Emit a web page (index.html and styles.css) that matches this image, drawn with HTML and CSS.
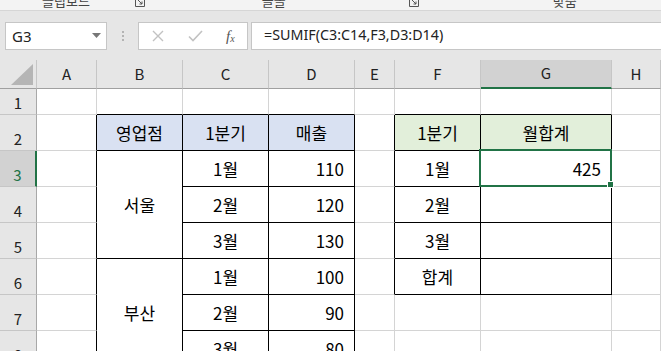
FILE: index.html
```html
<!DOCTYPE html>
<html lang="ko">
<head>
    <meta charset="UTF-8">
    <title>SUMIF 월합계</title>
    <link rel="stylesheet" href="styles.css">
</head>
<body>

<!-- Ribbon (group labels, cut off at the top) -->
<div class="ribbon">
    <span class="group-label clip">클립보드</span>
    <svg class="launcher launcher-1" width="12" height="9" viewBox="0 0 12 9">
        <path d="M1.5 0V7.5H10.5V0" fill="none" stroke="#555" stroke-width="1"/>
        <path d="M3.5 0.5L8 5M8 2.5V5H5.5" fill="none" stroke="#555" stroke-width="1"/>
    </svg>
    <span class="group-label font">글꼴</span>
    <svg class="launcher launcher-2" width="12" height="9" viewBox="0 0 12 9">
        <path d="M1.5 0V7.5H10.5V0" fill="none" stroke="#555" stroke-width="1"/>
        <path d="M3.5 0.5L8 5M8 2.5V5H5.5" fill="none" stroke="#555" stroke-width="1"/>
    </svg>
    <span class="group-label align">맞춤</span>
</div>

<!-- Formula bar -->
<div class="formula-bar">
    <div class="name-box">
        <span>G3</span>
        <svg width="9" height="5" viewBox="0 0 9 5"><path d="M0 0H9L4.5 5Z" fill="#777"/></svg>
    </div>
    <div class="grip">
        <i></i><i></i><i></i>
    </div>
    <div class="fx-buttons">
        <svg width="12" height="12" viewBox="0 0 12 12"><path d="M1 1L11 11M11 1L1 11" stroke="#c2c2c2" stroke-width="1.4"/></svg>
        <svg width="15" height="12" viewBox="0 0 15 12"><path d="M1 6.5L5 10.5L14 1" fill="none" stroke="#c2c2c2" stroke-width="1.6"/></svg>
        <span class="fx">f<sub>x</sub></span>
    </div>
    <div class="formula">=SUMIF(C3:C14,F3,D3:D14)</div>
</div>

<!-- Worksheet -->
<div class="sheet">
    <!-- column headers -->
    <div class="corner"><svg width="22" height="21" viewBox="0 0 22 21"><path d="M22 0V21H0Z" fill="#b5b5b5"/></svg></div>
    <div class="col-head">A</div>
    <div class="col-head">B</div>
    <div class="col-head">C</div>
    <div class="col-head">D</div>
    <div class="col-head">E</div>
    <div class="col-head">F</div>
    <div class="col-head selected">G</div>
    <div class="col-head">H</div>

    <!-- row 1 -->
    <div class="row-head">1</div>
    <div class="cell"></div>
    <div class="cell above"></div>
    <div class="cell above"></div>
    <div class="cell above"></div>
    <div class="cell"></div>
    <div class="cell above"></div>
    <div class="cell above"></div>
    <div class="cell"></div>

    <!-- row 2 -->
    <div class="row-head">2</div>
    <div class="cell before"></div>
    <div class="cell tb head-blue center">영업점</div>
    <div class="cell tb head-blue center">1분기</div>
    <div class="cell tb head-blue center">매출</div>
    <div class="cell before"></div>
    <div class="cell tb head-green center">1분기</div>
    <div class="cell tb head-green center">월합계</div>
    <div class="cell"></div>

    <!-- row 3 -->
    <div class="row-head selected">3</div>
    <div class="cell before"></div>
    <div class="cell tb center span-3">서울</div>
    <div class="cell tb center">1월</div>
    <div class="cell tb num">110</div>
    <div class="cell before"></div>
    <div class="cell tb center">1월</div>
    <div class="cell tb num active">425<span class="fill-handle"></span></div>
    <div class="cell"></div>

    <!-- row 4 -->
    <div class="row-head">4</div>
    <div class="cell before"></div>
    <div class="cell tb center">2월</div>
    <div class="cell tb num">120</div>
    <div class="cell before"></div>
    <div class="cell tb center">2월</div>
    <div class="cell tb"></div>
    <div class="cell"></div>

    <!-- row 5 -->
    <div class="row-head">5</div>
    <div class="cell before"></div>
    <div class="cell tb center">3월</div>
    <div class="cell tb num">130</div>
    <div class="cell before"></div>
    <div class="cell tb center">3월</div>
    <div class="cell tb"></div>
    <div class="cell"></div>

    <!-- row 6 -->
    <div class="row-head">6</div>
    <div class="cell before"></div>
    <div class="cell tb center span-3">부산</div>
    <div class="cell tb center">1월</div>
    <div class="cell tb num">100</div>
    <div class="cell before"></div>
    <div class="cell tb center">합계</div>
    <div class="cell tb"></div>
    <div class="cell"></div>

    <!-- row 7 -->
    <div class="row-head">7</div>
    <div class="cell before"></div>
    <div class="cell tb center">2월</div>
    <div class="cell tb num">90</div>
    <div class="cell"></div>
    <div class="cell"></div>
    <div class="cell"></div>
    <div class="cell"></div>

    <!-- row 8 -->
    <div class="row-head">8</div>
    <div class="cell before"></div>
    <div class="cell tb center">3월</div>
    <div class="cell tb num">80</div>
    <div class="cell"></div>
    <div class="cell"></div>
    <div class="cell"></div>
    <div class="cell"></div>
</div>

</body>
</html>
```

FILE: styles.css
```css
/* Page */
body {
    margin: 0;
    width: 661px;
    height: 351px;
    overflow: hidden;
    background: #e6e6e6;
    font-family: "Noto Sans CJK KR", "Noto Sans", sans-serif;
}

/* Ribbon strip */
.ribbon {
    height: 10px;
    background: #f3f3f3;
    border-bottom: 1px solid #d6d6d6;
    overflow: hidden;
    display: flex;
    align-items: flex-start;
    color: #444;
    font-size: 13px;
}

.group-label {
    line-height: 16px;
    margin-top: -7px;
    white-space: nowrap;
}

.clip { margin-left: 42px; }
.launcher { flex: none; margin-top: -1px; }
.launcher-1 { margin-left: 44px; }
.font { margin-left: 116px; }
.launcher-2 { margin-left: 122px; }
.align { margin-left: 133px; }

/* Formula bar */
.formula-bar {
    height: 49px;
    box-sizing: border-box;
    padding: 11px 0 0 5px;
    display: flex;
    align-items: flex-start;
    font-family: "Noto Sans", sans-serif;
}

.name-box {
    width: 102px;
    height: 28px;
    box-sizing: border-box;
    background: #fff;
    border: 1px solid #c6c6c6;
    display: flex;
    align-items: center;
    justify-content: space-between;
    padding: 0 5px 1px 6px;
    font-size: 15px;
    color: #222;
}

.grip {
    width: 2px;
    margin: 9px 0 0 15px;
    display: flex;
    flex-direction: column;
    gap: 2px;
}

.grip i {
    display: block;
    width: 2px;
    height: 2px;
    background: #b3b3b3;
}

.fx-buttons {
    width: 110px;
    height: 28px;
    box-sizing: border-box;
    margin-left: 14px;
    background: #fff;
    border: 1px solid #c6c6c6;
    display: flex;
    align-items: center;
    padding: 0 0 0 13px;
}

.fx-buttons svg:nth-child(2) { margin-left: 24px; }

.fx {
    margin-left: 23px;
    font-family: "Liberation Serif", serif;
    font-style: italic;
    font-size: 15px;
    color: #555;
}

.fx sub {
    font-size: 10px;
    vertical-align: -1px;
}

.formula {
    flex: 1;
    height: 28px;
    box-sizing: border-box;
    margin-left: 3px;
    background: #fff;
    border: 1px solid #c6c6c6;
    border-right: none;
    padding: 2px 0 0 12px;
    font-size: 14.3px;
    color: #222;
    white-space: nowrap;
}

/* Worksheet grid */
.sheet {
    display: grid;
    grid-template-columns: 37px 60px 86px 86px 86px 40px 86px 131px 1fr;
    grid-template-rows: 29px 26px repeat(7, 36px);
    background: #fff;
}

.sheet > div {
    box-sizing: border-box;
}

.corner {
    background: #e6e6e6;
    border-right: 1px solid #c6c6c6;
    border-bottom: 1px solid #a0a0a0;
    display: flex;
    align-items: flex-end;
    justify-content: flex-end;
    padding: 0 3px 3px 0;
}

.col-head {
    background: #e6e6e6;
    border-right: 1px solid #c6c6c6;
    border-bottom: 1px solid #a0a0a0;
    display: flex;
    align-items: center;
    justify-content: center;
    padding-bottom: 2px;
    font-size: 15px;
    color: #222;
}

.col-head.selected {
    background: #d2d2d2;
    border-bottom: 2px solid #217346;
}

.row-head {
    background: #e6e6e6;
    border-right: 1px solid #a8a8a8;
    border-bottom: 1px solid #c6c6c6;
    display: flex;
    align-items: flex-end;
    justify-content: center;
    padding-bottom: 2px;
    font-size: 15px;
    line-height: 18px;
    color: #222;
}

.row-head.selected {
    background: #d2d2d2;
    border-right: 2px solid #217346;
    color: #217346;
}

.cell {
    border-right: 1px solid #d4d4d4;
    border-bottom: 1px solid #d4d4d4;
    display: flex;
    align-items: center;
    font-size: 17px;
    color: #000;
}

/* Table borders */
.cell.tb {
    border-right-color: #000;
    border-bottom-color: #000;
}

.cell.before {
    border-right-color: #000;
}

.cell.above {
    border-bottom-color: #000;
}

.head-blue { background: #d9e1f2; }
.head-green { background: #e2efda; }

.center {
    justify-content: center;
    padding-bottom: 1px;
}

.num {
    justify-content: flex-end;
    padding: 0 10px 1px 0;
}

.span-3 {
    grid-row: span 3;
}

/* Active cell */
.active {
    position: relative;
}

.active::after {
    content: "";
    position: absolute;
    left: -2px;
    top: -2px;
    right: -1px;
    bottom: -1px;
    border: 2px solid #217346;
}

.fill-handle {
    position: absolute;
    right: -3px;
    bottom: -2px;
    width: 5px;
    height: 5px;
    background: #217346;
    border: 1px solid #fff;
    z-index: 2;
}
```
